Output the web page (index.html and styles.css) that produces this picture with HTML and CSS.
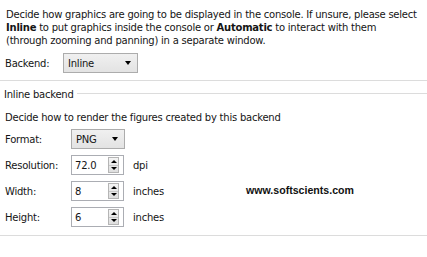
FILE: index.html
```html
<!DOCTYPE html>
<html>
<head>
<meta charset="utf-8">
<link rel="stylesheet" href="styles.css">
</head>
<body>
<div class="page">
  <div class="intro">
    <div>Decide how graphics are going to be displayed in the console. If unsure, please select</div>
    <div><b>Inline</b> to put graphics inside the console or <b>Automatic</b> to interact with them</div>
    <div>(through zooming and panning) in a separate window.</div>
  </div>
  <div class="row backend-row">
    <span class="label backend-label">Backend:</span>
    <div class="combo combo-backend"><span>Inline</span><span class="arrow"></span></div>
  </div>
  <div class="sep"></div>
  <div class="group">
    <div class="group-title"><span>Inline backend</span><span class="group-line"></span></div>
    <div class="desc">Decide how to render the figures created by this backend</div>
    <div class="rows">
      <div class="row">
        <span class="label">Format:</span>
        <div class="combo combo-format"><span>PNG</span><span class="arrow"></span></div>
      </div>
      <div class="row">
        <span class="label">Resolution:</span>
        <div class="spin"><span class="value">72.0</span><span class="buttons"><span class="up"></span><span class="down"></span></span></div>
        <span class="unit">dpi</span>
      </div>
      <div class="row">
        <span class="label">Width:</span>
        <div class="spin"><span class="value">8</span><span class="buttons"><span class="up"></span><span class="down"></span></span></div>
        <span class="unit">inches</span>
      </div>
      <div class="row">
        <span class="label">Height:</span>
        <div class="spin"><span class="value">6</span><span class="buttons"><span class="up"></span><span class="down"></span></span></div>
        <span class="unit">inches</span>
      </div>
    </div>
  </div>
  <div class="sep bottom-sep"></div>
  <div class="watermark">www.softscients.com</div>
</div>
</body>
</html>
```
FILE: styles.css
```css
html, body {
  margin: 0;
  padding: 0;
  background: #ffffff;
}
body {
  width: 427px;
  height: 257px;
  overflow: hidden;
  font-family: "DejaVu Sans", sans-serif;
  font-size: 10px;
  letter-spacing: -0.23px;
  color: #151515;
}
.page {
  position: relative;
  height: 257px;
}
.intro {
  padding: 8px 0 0 6px;
  line-height: 13px;
  white-space: nowrap;
}
.row {
  display: flex;
  align-items: center;
  height: 20px;
}
.backend-row {
  margin-top: 6px;
}
.label {
  padding-left: 5px;
  width: 71px;
  box-sizing: border-box;
}
.backend-label {
  width: 63px;
}
.combo {
  box-sizing: border-box;
  height: 20px;
  border: 1px solid #acacac;
  background: linear-gradient(#f0f0f0, #e3e3e3);
  display: flex;
  align-items: center;
  justify-content: space-between;
  padding: 0 6px 0 4px;
}
.combo-backend { width: 75px; }
.combo-format { width: 54px; }
.arrow {
  width: 0;
  height: 0;
  border-left: 3.5px solid transparent;
  border-right: 3.5px solid transparent;
  border-top: 4px solid #000;
}
.sep {
  height: 1px;
  background: #dcdcdc;
  margin-top: 7px;
}
.group-title {
  margin-top: 7px;
  height: 13px;
  line-height: 13px;
  display: flex;
  align-items: flex-start;
  padding-left: 4px;
}
.group-line {
  flex: 1;
  height: 1px;
  background: #dcdcdc;
  margin-top: 5px;
  margin-left: 3px;
}
.desc {
  margin-top: 10px;
  padding-left: 5px;
  line-height: 13px;
}
.rows {
  margin-top: 5px;
  display: flex;
  flex-direction: column;
  gap: 6px;
}
.spin {
  box-sizing: border-box;
  width: 53px;
  height: 20px;
  border: 1px solid #abadb3;
  background: #fff;
  display: flex;
  align-items: center;
  justify-content: space-between;
  padding: 0 4px 0 3px;
}
.buttons {
  display: flex;
  flex-direction: column;
  width: 11px;
  height: 16px;
  border: 1px solid #b5b5b5;
  box-sizing: border-box;
  background: linear-gradient(#f4f4f4, #dedede);
}
.buttons span {
  flex: 1;
  display: flex;
  align-items: center;
  justify-content: center;
}
.up::before {
  content: "";
  border-left: 3px solid transparent;
  border-right: 3px solid transparent;
  border-bottom: 3px solid #000;
}
.down::before {
  content: "";
  border-left: 3px solid transparent;
  border-right: 3px solid transparent;
  border-top: 3px solid #000;
}
.down {
  border-top: 1px solid #c8c8c8;
}
.unit {
  margin-left: 9px;
}
.bottom-sep {
  margin-top: 8px;
}
.watermark {
  position: absolute;
  left: 246px;
  top: 184px;
  font-family: "Liberation Sans", sans-serif;
  font-weight: bold;
  font-size: 10.6px;
  letter-spacing: 0;
  color: #111;
}
```
